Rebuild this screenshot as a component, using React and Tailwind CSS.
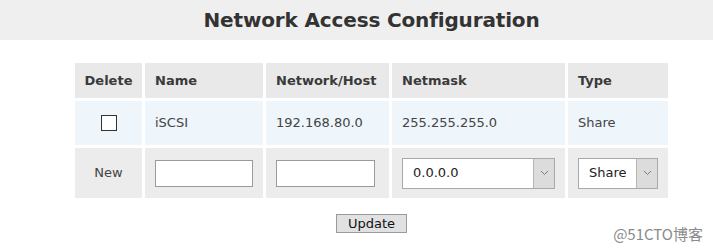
import React from "react";

const F = { fontFamily: '"DejaVu Sans", Verdana, sans-serif' };

function Chevron() {
  return (
    <svg width="9" height="6" viewBox="0 0 9 6" fill="none">
      <path d="M1 1l3.5 3.5L8 1" stroke="#7a7a7a" strokeWidth="1" />
    </svg>
  );
}

function Select({ value, width }) {
  return (
    <div className={`flex h-[31px] ${width} border border-[#a9a9a9] bg-white`}>
      <div className="flex flex-1 items-center pl-[10px] text-[13px] text-[#222]">{value}</div>
      <div className="flex w-[21px] items-center justify-center border-l border-[#b5b5b5] bg-[#dcdcdc]">
        <Chevron />
      </div>
    </div>
  );
}

export default function App() {
  const head = "flex items-center bg-[#e9e9e9] px-[10px] text-[13px] font-bold text-[#3a3a3a]";
  const data = "flex items-center bg-[#eef5fb] px-[10px] text-[13px] text-[#444]";
  const nw = "flex items-center bg-[#ececec] px-[10px]";
  return (
    <div className="relative h-[252px] w-[713px] bg-white" style={F}>
      <div className="flex h-[40px] items-center bg-[#efefef] pl-[30px]">
        <h1 className="w-full text-center text-[20px] font-bold tracking-[-0.15px] text-[#333]">
          Network Access Configuration
        </h1>
      </div>
      <div className="flex flex-col items-center pl-[30px] pt-[23px]">
        <div className="grid grid-cols-[67px_118px_123px_173px_100px] grid-rows-[35px_44px_50px] gap-[3px]">
          <div className={`${head} justify-center`}>Delete</div>
          <div className={head}>Name</div>
          <div className={head}>Network/Host</div>
          <div className={head}>Netmask</div>
          <div className={head}>Type</div>

          <div className={`${data} justify-center`}>
            <div className="h-[16px] w-[16px] border border-[#333] bg-white" />
          </div>
          <div className={data}>iSCSI</div>
          <div className={data}>192.168.80.0</div>
          <div className={data}>255.255.255.0</div>
          <div className={data}>Share</div>

          <div className={`${nw} justify-center text-[13px] text-[#444]`}>New</div>
          <div className={nw}>
            <div className="h-[27px] w-[98px] border border-[#9a9a9a] bg-white" />
          </div>
          <div className={nw}>
            <div className="h-[27px] w-[99px] border border-[#9a9a9a] bg-white" />
          </div>
          <div className={nw}>
            <Select value="0.0.0.0" width="w-[154px]" />
          </div>
          <div className={nw}>
            <Select value="Share" width="w-[80px]" />
          </div>
        </div>
        <div className="mt-[16px] flex h-[19px] w-[71px] items-center justify-center border border-[#9a9a9a] bg-[#e1e1e1] text-[13px] text-[#111]">
          Update
        </div>
      </div>
      <div
        className="absolute right-[10px] top-[224px] text-[15px] leading-[20px] text-[#8a8a8a]"
        style={{ fontFamily: '"Noto Sans CJK SC", sans-serif' }}
      >
        @51CTO博客
      </div>
    </div>
  );
}
